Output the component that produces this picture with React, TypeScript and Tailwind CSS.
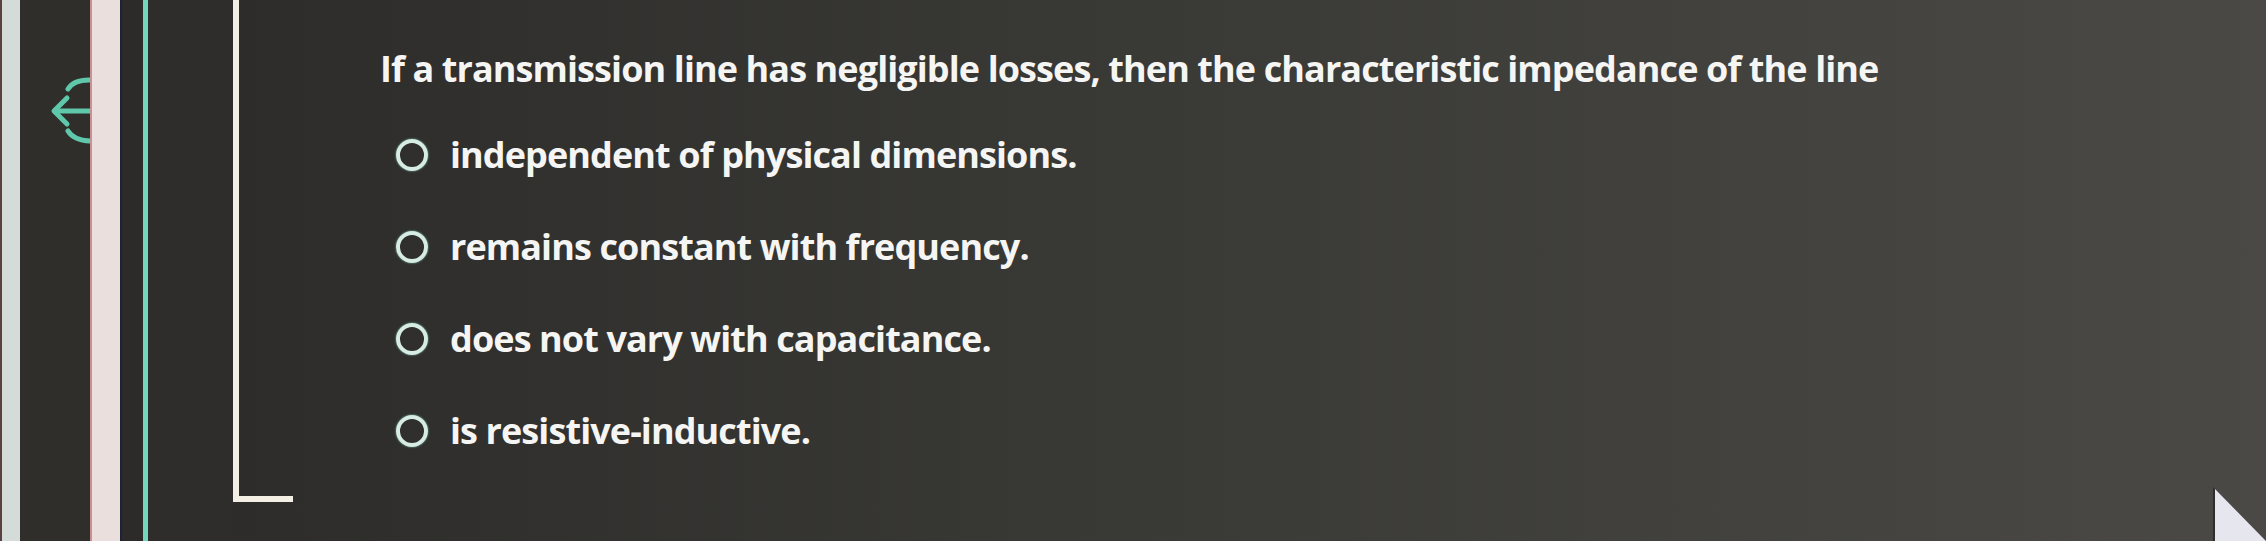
const options = [
  "independent of physical dimensions.",
  "remains constant with frequency.",
  "does not vary with capacitance.",
  "is resistive-inductive.",
]

function ExitIcon() {
  return (
    <svg width="70" height="80" viewBox="20 72 70 80" className="mt-[70px]" fill="none" stroke="#5fc8ab" strokeWidth="5" strokeLinecap="round" strokeLinejoin="round">
      <path d="M92 82 Q74 81 68 91" />
      <path d="M68 133 Q74 143 92 143" />
      <path d="M55 113 L92 113" />
      <path d="M67 100 L54 113 L67 126" />
    </svg>
  )
}

function Radio({ label }: { label: string }) {
  return (
    <div className="flex items-center h-[44px]">
      <span className="w-[32px] h-[32px] rounded-full border-[4px] border-[#d6ece4] shadow-[0_0_2px_#7fd8c0] shrink-0" />
      <span className="ml-[22px] text-[36px] leading-[44px] font-bold text-[#f5f5f3] tracking-[-0.9px] whitespace-nowrap">{label}</span>
    </div>
  )
}

export default function App() {
  return (
    <div className="relative w-[2266px] h-[541px] overflow-hidden flex bg-gradient-to-r from-[#2a2927] via-[#393936] to-[#4a4945]" style={{ fontFamily: '"Open Sans", "Noto Sans", sans-serif' }}>
      <div className="w-[2px] bg-[#5a4042]" />
      <div className="w-[18px] bg-[#d4dcda]" />
      <div className="w-[70px] bg-[#2f2e2b] flex justify-end">
        <ExitIcon />
      </div>
      <div className="w-[30px] bg-[#ebdfdd] border-l-2 border-[#c98f92]" />
      <div className="w-[23px] bg-[#2c2b29] border-l-2 border-[#1c2338]" />
      <div className="w-[5px] bg-[#72d7ba]" />
      <div className="w-[85px] bg-[#2e2d2b]" />

      <div className="w-[60px] h-[502px] border-l-[6px] border-b-[6px] border-[#f3efe4] shrink-0" />

      <div className="ml-[87px] pt-[47px] flex flex-col">
        <h2 className="text-[36px] leading-[44px] font-bold text-[#f5f5f3] tracking-[-0.9px] whitespace-nowrap">
          If a transmission line has negligible losses, then the characteristic impedance of the line
        </h2>
        <div className="mt-[42px] ml-[16px] flex flex-col gap-[48px]">
          {options.map(o => <Radio key={o} label={o} />)}
        </div>
      </div>

      <svg className="absolute right-0 bottom-0" width="56" height="56" viewBox="0 0 56 56">
        <polygon points="3,2 3,56 56,56" fill="#1e1e22" opacity="0.6" />
        <polygon points="5,4 5,56 56,56" fill="#e6e6ee" />
      </svg>
    </div>
  )
}
